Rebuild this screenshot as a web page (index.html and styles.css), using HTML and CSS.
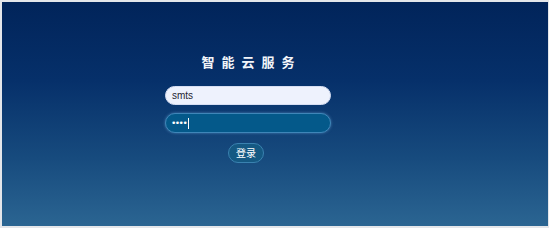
FILE: index.html
```html
<!DOCTYPE html>
<html lang="zh">
<head>
<meta charset="utf-8">
<title>智能云服务</title>
<link rel="stylesheet" href="styles.css">
</head>
<body>
<div class="frame">
  <div class="login">
    <h1 class="title">智能云服务</h1>
    <div class="field field-user"><span class="value">smts</span></div>
    <div class="field field-pass"><span class="dots">••••</span><span class="caret"></span></div>
    <div class="actions"><button class="btn" type="button">登录</button></div>
  </div>
</div>
</body>
</html>
```
FILE: styles.css
```css
html, body {
  margin: 0;
  padding: 0;
  background: #ffffff;
}
.frame {
  box-sizing: border-box;
  width: 549px;
  height: 228px;
  border-style: solid;
  border-color: #e4e6ea;
  border-width: 2px 1px 2px 2px;
  background: linear-gradient(to bottom, #01245a 0%, #06306a 35%, #174b7e 70%, #2b6592 100%);
  font-family: "Noto Sans CJK SC", "Liberation Sans", sans-serif;
}
.login {
  width: 166px;
  margin-left: 163px;
  padding-top: 52px;
  display: flex;
  flex-direction: column;
}
.title {
  margin: 0;
  font-size: 13px;
  line-height: 16px;
  font-weight: 700;
  color: #f2f5fa;
  letter-spacing: 7px;
  text-align: center;
  padding-left: 7px;
}
.field {
  box-sizing: border-box;
  height: 19px;
  border-radius: 10px;
  display: flex;
  align-items: center;
  padding-left: 6px;
  font-family: "Liberation Sans", "Noto Sans", sans-serif;
  font-size: 10px;
}
.field-user {
  margin-top: 16px;
  background: #eef2fd;
  border: 1px solid #d6def2;
  color: #1e2433;
}
.field-pass {
  margin-top: 8px;
  height: 20px;
  background: #04598a;
  border: 1px solid #3f86b8;
  box-shadow: 0 0 3px rgba(120, 180, 230, 0.55);
  color: #ffffff;
  padding-left: 5px;
}
.dots {
  font-family: "DejaVu Sans", sans-serif;
  font-size: 9px;
  letter-spacing: -1.5px;
  line-height: 10px;
}
.caret {
  display: inline-block;
  width: 1px;
  height: 11px;
  margin-left: 2px;
  background: #ffffff;
}
.actions {
  display: flex;
  margin-top: 10px;
  padding-left: 63px;
}
.btn {
  box-sizing: border-box;
  width: 36px;
  height: 20px;
  padding: 0;
  border-radius: 10px;
  background: #155983;
  border: 1px solid #3a82b0;
  color: #ffffff;
  font-family: "Noto Sans CJK SC", sans-serif;
  font-size: 10px;
  line-height: 18px;
}
```
